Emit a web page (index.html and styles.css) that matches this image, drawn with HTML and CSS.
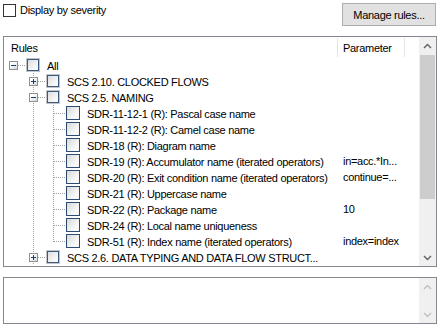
FILE: index.html
```html
<!DOCTYPE html>
<html lang="en">
<head>
    <meta charset="UTF-8">
    <title>Rules</title>
    <link rel="stylesheet" href="styles.css">
</head>
<body>
    <div class="top">
        <label class="severity"><span class="box"></span>Display by severity</label>
        <button class="manage">Manage rules...</button>
    </div>

    <div class="tree-box">
        <div class="tree-main">
            <div class="tree-header">
                <div class="col-rules">Rules</div>
                <div class="col-param">Parameter</div>
                <div class="col-rest"></div>
            </div>
            <div class="rows">
                <div class="row">
                    <div class="name"><span class="n root"><span class="exp minus"></span></span><span class="cb part"></span><span class="label">All</span></div>
                    <div class="param"></div>
                </div>
                <div class="row">
                    <div class="name"><span class="g"></span><span class="n mid"><span class="exp plus"></span></span><span class="cb part"></span><span class="label">SCS 2.10. CLOCKED FLOWS</span></div>
                    <div class="param"></div>
                </div>
                <div class="row">
                    <div class="name"><span class="g"></span><span class="n mid"><span class="exp minus"></span></span><span class="cb part"></span><span class="label">SCS 2.5. NAMING</span></div>
                    <div class="param"></div>
                </div>
                <div class="row">
                    <div class="name"><span class="g"></span><span class="g v"></span><span class="n mid"></span><span class="cb"></span><span class="label">SDR-11-12-1 (R): Pascal case name</span></div>
                    <div class="param"></div>
                </div>
                <div class="row">
                    <div class="name"><span class="g"></span><span class="g v"></span><span class="n mid"></span><span class="cb"></span><span class="label">SDR-11-12-2 (R): Camel case name</span></div>
                    <div class="param"></div>
                </div>
                <div class="row">
                    <div class="name"><span class="g"></span><span class="g v"></span><span class="n mid"></span><span class="cb"></span><span class="label">SDR-18 (R): Diagram name</span></div>
                    <div class="param"></div>
                </div>
                <div class="row">
                    <div class="name"><span class="g"></span><span class="g v"></span><span class="n mid"></span><span class="cb"></span><span class="label">SDR-19 (R): Accumulator name (iterated operators)</span></div>
                    <div class="param">in=acc.*In...</div>
                </div>
                <div class="row">
                    <div class="name"><span class="g"></span><span class="g v"></span><span class="n mid"></span><span class="cb"></span><span class="label">SDR-20 (R): Exit condition name (iterated operators)</span></div>
                    <div class="param">continue=...</div>
                </div>
                <div class="row">
                    <div class="name"><span class="g"></span><span class="g v"></span><span class="n mid"></span><span class="cb"></span><span class="label">SDR-21 (R): Uppercase name</span></div>
                    <div class="param"></div>
                </div>
                <div class="row">
                    <div class="name"><span class="g"></span><span class="g v"></span><span class="n mid"></span><span class="cb"></span><span class="label">SDR-22 (R): Package name</span></div>
                    <div class="param">10</div>
                </div>
                <div class="row">
                    <div class="name"><span class="g"></span><span class="g v"></span><span class="n mid"></span><span class="cb"></span><span class="label">SDR-24 (R): Local name uniqueness</span></div>
                    <div class="param"></div>
                </div>
                <div class="row">
                    <div class="name"><span class="g"></span><span class="g v"></span><span class="n last"></span><span class="cb"></span><span class="label">SDR-51 (R): Index name (iterated operators)</span></div>
                    <div class="param">index=index</div>
                </div>
                <div class="row">
                    <div class="name"><span class="g"></span><span class="n mid"><span class="exp plus"></span></span><span class="cb part"></span><span class="label">SCS 2.6. DATA TYPING AND DATA FLOW STRUCT...</span></div>
                    <div class="param"></div>
                </div>
            </div>
        </div>
        <div class="vscroll">
            <div class="arrow"><svg width="9" height="6" viewBox="0 0 9 6"><polyline points="1,5 4.5,1.5 8,5" fill="none" stroke="#606060" stroke-width="1.4"/></svg></div>
            <div class="track"><div class="thumb"></div></div>
            <div class="arrow"><svg width="9" height="6" viewBox="0 0 9 6"><polyline points="1,1 4.5,4.5 8,1" fill="none" stroke="#606060" stroke-width="1.4"/></svg></div>
        </div>
    </div>

    <div class="desc-box">
        <div class="desc-text"></div>
        <div class="vscroll off">
            <div class="arrow"><svg width="9" height="6" viewBox="0 0 9 6"><polyline points="1,5 4.5,1.5 8,5" fill="none" stroke="#bfbfbf" stroke-width="1.4"/></svg></div>
            <div class="track"></div>
            <div class="arrow"><svg width="9" height="6" viewBox="0 0 9 6"><polyline points="1,1 4.5,4.5 8,1" fill="none" stroke="#bfbfbf" stroke-width="1.4"/></svg></div>
        </div>
    </div>
</body>
</html>
```

FILE: styles.css
```css
* {
    box-sizing: border-box;
    margin: 0;
    padding: 0;
}

body {
    font-family: "Liberation Sans", Arial, sans-serif;
    font-size: 11px;
    letter-spacing: -0.3px;
    color: #000;
    background-color: #fff;
    padding: 0 3px;
    width: 440px;
    height: 327px;
    overflow: hidden;
}

.top {
    display: flex;
    justify-content: space-between;
    align-items: flex-start;
    padding-top: 3px;
    height: 26px;
}

.severity {
    display: flex;
    align-items: center;
    gap: 4px;
    height: 13px;
    line-height: 13px;
    margin-top: 1px;
}

.severity .box {
    width: 13px;
    height: 13px;
    border: 1px solid #333;
    background-color: #fff;
}

.manage {
    width: 94px;
    height: 23px;
    margin-right: 1px;
    font-family: inherit;
    font-size: 11px;
    letter-spacing: -0.3px;
    color: #000;
    background-color: #e1e1e1;
    border: 1px solid #adadad;
}

/* rules tree */
.tree-box {
    display: flex;
    margin-top: 10px;
    height: 231px;
    border: 1px solid #828790;
}

.tree-main {
    flex: 1;
    display: flex;
    flex-direction: column;
    min-width: 0;
}

.tree-header {
    display: flex;
    height: 20px;
    line-height: 20px;
    padding-top: 1px;
}

.col-rules {
    width: 334px;
    padding-left: 7px;
    border-right: 1px solid #e5e5e5;
}

.col-param {
    width: 67px;
    padding-left: 5px;
    border-right: 1px solid #e5e5e5;
}

.col-rest {
    flex: 1;
}

.rows {
    display: flex;
    flex-direction: column;
}

.row {
    display: flex;
    height: 16px;
    line-height: 16px;
}

.name {
    width: 334px;
    display: flex;
    overflow: hidden;
    white-space: nowrap;
}

.param {
    flex: 1;
    padding-left: 5px;
    white-space: nowrap;
    overflow: hidden;
}

.label {
    margin-left: 7px;
    padding-top: 1px;
}

/* tree guide lines */
.g {
    width: 20px;
    height: 16px;
    flex: none;
}

.g.v {
    background: repeating-linear-gradient(to bottom, #a0a0a0 0 1px, transparent 1px 2px) 9px 0 / 1px 16px no-repeat;
}

.n {
    width: 22px;
    height: 16px;
    flex: none;
    display: flex;
    align-items: flex-start;
}

.n.root {
    background: repeating-linear-gradient(to right, #a0a0a0 0 1px, transparent 1px 2px) 10px 8px / 12px 1px no-repeat;
}

.n.mid {
    background:
        repeating-linear-gradient(to right, #a0a0a0 0 1px, transparent 1px 2px) 10px 8px / 12px 1px no-repeat,
        repeating-linear-gradient(to bottom, #a0a0a0 0 1px, transparent 1px 2px) 9px 0 / 1px 16px no-repeat;
}

.n.last {
    background:
        repeating-linear-gradient(to right, #a0a0a0 0 1px, transparent 1px 2px) 10px 8px / 12px 1px no-repeat,
        repeating-linear-gradient(to bottom, #a0a0a0 0 1px, transparent 1px 2px) 9px 0 / 1px 9px no-repeat;
}

.exp {
    width: 9px;
    height: 9px;
    margin: 4px 0 0 5px;
    border: 1px solid #919191;
}

.exp.minus {
    background:
        linear-gradient(#1e3c6e, #1e3c6e) center / 5px 1px no-repeat,
        linear-gradient(135deg, #fff 30%, #d6d6d6);
}

.exp.plus {
    background:
        linear-gradient(#1e3c6e, #1e3c6e) center / 5px 1px no-repeat,
        linear-gradient(#1e3c6e, #1e3c6e) center / 1px 5px no-repeat,
        linear-gradient(135deg, #fff 30%, #d6d6d6);
}

.cb {
    width: 14px;
    height: 14px;
    margin-top: 1px;
    flex: none;
    border: 1px solid #2c4a72;
    background: linear-gradient(135deg, #d9d9d9, #fafafa 75%);
}

.cb.part {
    border-color: #c4c4c4;
    box-shadow: inset 0 0 0 1px #3a5a84;
}

/* scrollbars */
.vscroll {
    width: 17px;
    display: flex;
    flex-direction: column;
    background-color: #f0f0f0;
}

.arrow {
    height: 17px;
    display: flex;
    align-items: center;
    justify-content: center;
}

.track {
    flex: 1;
    padding: 1px 1px 0;
}

.thumb {
    height: 144px;
    background-color: #cdcdcd;
}

/* description */
.desc-box {
    display: flex;
    margin-top: 10px;
    height: 47px;
    border: 1px solid #828790;
}

.desc-text {
    flex: 1;
}
```
